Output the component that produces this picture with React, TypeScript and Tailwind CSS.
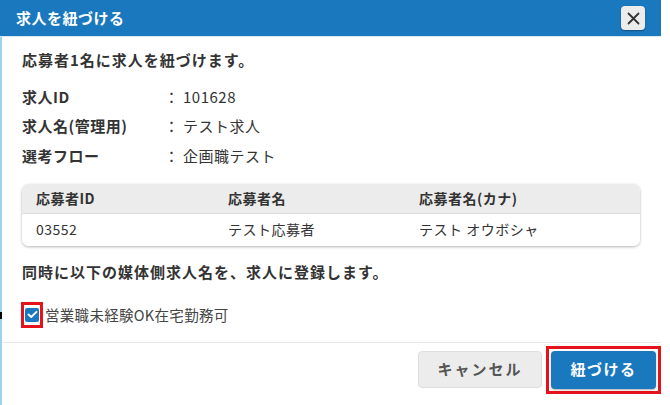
import React from "react";

const font = { fontFamily: '"Noto Sans CJK JP", "Noto Sans", sans-serif' };

export default function App() {
  return (
    <div className="relative w-[670px] h-[405px] bg-white overflow-hidden text-[#333]" style={font}>
      <div className="w-[661px] h-full flex flex-col">
        <div className="h-[36px] bg-[#1a78bf] flex items-center justify-between pl-[16px] pr-[16px] shrink-0">
          <span className="text-white font-bold text-[15px] tracking-[0.5px]">求人を紐づける</span>
          <button className="w-[24px] h-[24px] rounded-[4px] bg-[#ececec] shadow-[0_1px_2px_rgba(0,0,0,0.35)] flex items-center justify-center">
            <svg width="13" height="13" viewBox="0 0 13 13" fill="none" stroke="#333" strokeWidth="1.8" strokeLinecap="round">
              <path d="M1.5 1.5 L11.5 11.5 M11.5 1.5 L1.5 11.5" />
            </svg>
          </button>
        </div>
        <div className="h-px bg-[#d7e8f4] shrink-0" />
        <div className="flex-1 flex flex-col border-l-2 border-[#9dd3ea]">
          <div className="pl-[20px] pr-[21px] pt-[13px]">
            <div className="h-[20px] flex items-center font-bold text-[15px] tracking-[1px]">応募者1名に求人を紐づけます。</div>
            <div className="mt-[12px] text-[15px] tracking-[0.5px]">
              {[
                ["求人ID", "101628"],
                ["求人名(管理用)", "テスト求人"],
                ["選考フロー", "企画職テスト"],
              ].map(([k, v]) => (
                <div key={k} className="h-[29.5px] flex items-center">
                  <span className="w-[142px] font-bold">{k}</span>
                  <span className="w-[19px]">：</span>
                  <span>{v}</span>
                </div>
              ))}
            </div>
            <div className="mt-[13px] rounded-[7px] shadow-[0_1px_3px_rgba(0,0,0,0.3)] overflow-hidden text-[14px] tracking-[0.5px]">
              <div className="h-[30px] bg-[#ececec] grid grid-cols-[206px_191px_1fr] items-center border-b border-[#dcdcdc] font-bold">
                <div className="pl-[14px]">応募者ID</div>
                <div>応募者名</div>
                <div>応募者名(カナ)</div>
              </div>
              <div className="h-[32px] bg-white grid grid-cols-[206px_191px_1fr] items-center">
                <div className="pl-[14px]">03552</div>
                <div>テスト応募者</div>
                <div>テスト オウボシャ</div>
              </div>
            </div>
            <div className="mt-[17px] h-[20px] flex items-center font-bold text-[15px] tracking-[1px]">同時に以下の媒体側求人名を、求人に登録します。</div>
            <div className="mt-[19px] h-[26px] flex items-center">
              <div className="w-[22px] h-[26px] border-[3px] border-[#e5121b] flex items-center justify-center -ml-[1px]">
                <div className="w-[14px] h-[14px] bg-[#1a78bf] rounded-[2px] flex items-center justify-center">
                  <svg width="11" height="9" viewBox="0 0 11 9" fill="none" stroke="white" strokeWidth="1.8" strokeLinecap="round" strokeLinejoin="round">
                    <path d="M1.5 4.5 L4.2 7 L9.5 1.8" />
                  </svg>
                </div>
              </div>
              <span className="ml-[2px] text-[14.5px] text-[#444] tracking-[0.3px]">営業職未経験OK在宅勤務可</span>
            </div>
          </div>
          <div className="mt-[14px] h-px bg-[#e8e8e8]" />
          <div className="flex items-center justify-end gap-[4px] pt-[3px] pr-0">
            <button className="w-[124px] h-[37px] rounded-[4px] bg-[#ececec] border border-[#dedede] text-[#555] font-bold text-[15px] tracking-[2px]">キャンセル</button>
            <div className="border-[3px] border-[#e5121b] p-[2px]">
              <button className="w-[105px] h-[38px] rounded-[4px] bg-[#1a78bf] text-white font-bold text-[15px] tracking-[1.5px] shadow-[0_1px_2px_rgba(0,0,0,0.3)]">紐づける</button>
            </div>
          </div>
        </div>
      </div>
      <div className="absolute left-0 top-[312px] w-[2px] h-[7px] bg-black" />
    </div>
  );
}
